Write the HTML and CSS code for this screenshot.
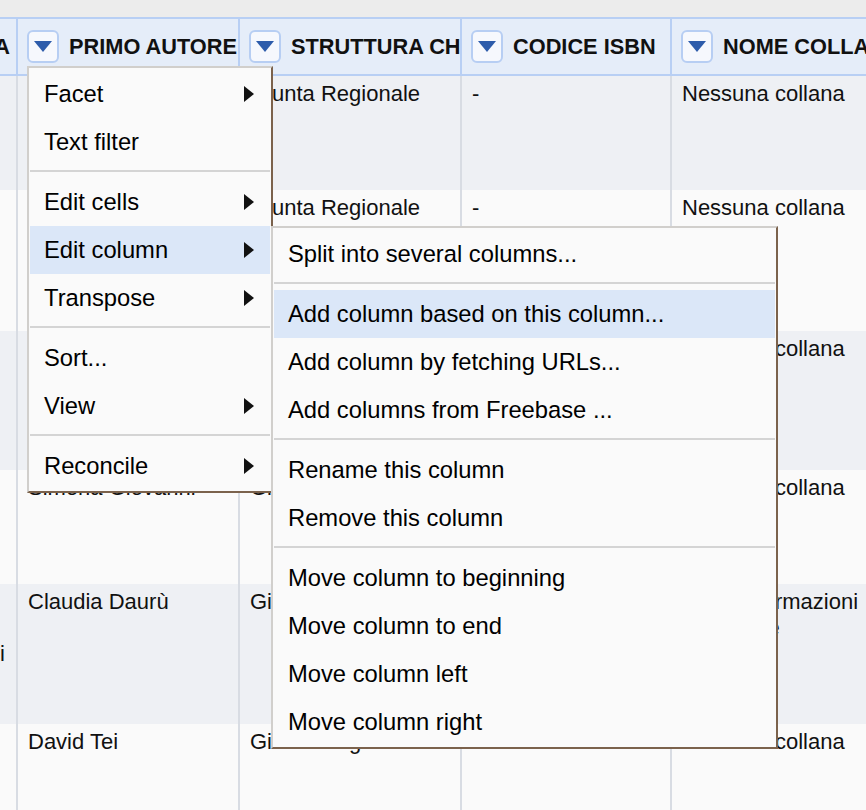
FILE: index.html
```html
<!DOCTYPE html>
<html lang="it">
<head>
<meta charset="utf-8">
<title>Edit column</title>
<link rel="stylesheet" href="styles.css">
</head>
<body>
<div class="page">
  <div class="topstrip"></div>
  <div class="grid">
    <div class="row head">
      <div class="hcell c0"><span class="htext">AREA</span></div>
      <div class="hcell"><span class="dd"></span><span class="htext">PRIMO AUTORE</span></div>
      <div class="hcell"><span class="dd"></span><span class="htext">STRUTTURA CHE HA CURATO</span></div>
      <div class="hcell"><span class="dd"></span><span class="htext">CODICE ISBN</span></div>
      <div class="hcell"><span class="dd"></span><span class="htext">NOME COLLANA</span></div>
    </div>
    <div class="row odd r1">
      <div class="cell c0"></div>
      <div class="cell">Marco Bianchi</div>
      <div class="cell">Giunta Regionale</div>
      <div class="cell">-</div>
      <div class="cell">Nessuna collana</div>
    </div>
    <div class="row even r2">
      <div class="cell c0"></div>
      <div class="cell">Laura Neri</div>
      <div class="cell">Giunta Regionale</div>
      <div class="cell">-</div>
      <div class="cell">Nessuna collana</div>
    </div>
    <div class="row odd r3">
      <div class="cell c0"></div>
      <div class="cell">Paolo Conti</div>
      <div class="cell">Giunta Regionale</div>
      <div class="cell">-</div>
      <div class="cell">Nessuna collana</div>
    </div>
    <div class="row even r4">
      <div class="cell c0"></div>
      <div class="cell">Simona Giovanni</div>
      <div class="cell">Giunta Regionale</div>
      <div class="cell">-</div>
      <div class="cell">Nessuna collana</div>
    </div>
    <div class="row odd r5">
      <div class="cell c0"><span class="tail">i</span></div>
      <div class="cell">Claudia Daurù</div>
      <div class="cell">Giunta Regionale</div>
      <div class="cell">-</div>
      <div class="cell">Serie informazioni statistiche</div>
    </div>
    <div class="row even r6">
      <div class="cell c0"></div>
      <div class="cell">David Tei</div>
      <div class="cell">Giunta Regionale</div>
      <div class="cell">-</div>
      <div class="cell">Nessuna collana</div>
    </div>
  </div>

  <div class="menu main-menu">
    <div class="mi sub">Facet</div>
    <div class="mi">Text filter</div>
    <div class="sep"></div>
    <div class="mi sub">Edit cells</div>
    <div class="mi sub active">Edit column</div>
    <div class="mi sub">Transpose</div>
    <div class="sep"></div>
    <div class="mi">Sort...</div>
    <div class="mi sub">View</div>
    <div class="sep"></div>
    <div class="mi sub">Reconcile</div>
  </div>

  <div class="menu submenu">
    <div class="mi">Split into several columns...</div>
    <div class="sep"></div>
    <div class="mi active">Add column based on this column...</div>
    <div class="mi">Add column by fetching URLs...</div>
    <div class="mi">Add columns from Freebase ...</div>
    <div class="sep"></div>
    <div class="mi">Rename this column</div>
    <div class="mi">Remove this column</div>
    <div class="sep"></div>
    <div class="mi">Move column to beginning</div>
    <div class="mi">Move column to end</div>
    <div class="mi">Move column left</div>
    <div class="mi">Move column right</div>
  </div>
</div>
</body>
</html>
```

FILE: styles.css
```css
* { box-sizing: border-box; }

html, body {
  margin: 0;
  padding: 0;
  background: #fafafa;
}

.page {
  position: relative;
  width: 866px;
  height: 810px;
  overflow: hidden;
  font-family: "Liberation Sans", Arial, Helvetica, sans-serif;
  color: #111;
}

.topstrip {
  height: 17px;
  background: #ececec;
}

.row {
  display: grid;
  grid-template-columns: 16px 222px 222px 210px 200px;
}

.head {
  height: 59px;
  background: #e5edf9;
  border-top: 2px solid #b8cff4;
  border-bottom: 2px solid #b8cff4;
}

.hcell {
  display: flex;
  align-items: center;
  gap: 10px;
  padding-left: 9px;
  border-left: 2px solid #b8cff4;
  overflow: hidden;
  white-space: nowrap;
}

.hcell.c0 {
  border-left: none;
  padding-left: 0;
  padding-right: 6px;
  justify-content: flex-end;
}

.htext {
  font-weight: bold;
  font-size: 21.75px;
  color: #111;
}

.dd {
  flex: none;
  width: 32px;
  height: 33px;
  border: 2px solid #b7cef3;
  border-radius: 6px;
  background: #f6f8fd;
  display: flex;
  align-items: center;
  justify-content: center;
}

.dd::after {
  content: "";
  border-top: 11px solid #2d5cab;
  border-left: 9px solid transparent;
  border-right: 9px solid transparent;
}

.cell {
  border-left: 2px solid #d8dce3;
  padding: 5px 10px 0 10px;
  font-size: 22px;
  line-height: 26px;
  overflow: hidden;
}

.cell.c0 {
  border-left: none;
  padding: 57px 13px 0 0;
  text-align: right;
}

.odd { background: #eef0f4; }
.even { background: #fafafa; }

.r1 { height: 114px; }
.r2 { height: 141px; }
.r3 { height: 139px; }
.r4 { height: 114px; }
.r5 { height: 140px; }
.r6 { height: 120px; }

/* menus */
.menu {
  position: absolute;
  background: #fafafa;
  border: 2px solid;
  border-color: #d1cfcc #7b624c #7b624c #d1cfcc;
  padding: 2px 1px 1px 1px;
  font-size: 23.75px;
  color: #000;
}

.main-menu {
  left: 27px;
  top: 66px;
  width: 246px;
  z-index: 2;
}

.submenu {
  left: 271px;
  top: 226px;
  width: 507px;
  z-index: 3;
}

.mi {
  height: 48px;
  display: flex;
  align-items: center;
  justify-content: space-between;
  padding: 0 16px 0 14px;
  white-space: nowrap;
}

.mi.active {
  background: #dbe7f8;
}

.mi.sub::after {
  content: "";
  border-left: 10px solid #111;
  border-top: 8px solid transparent;
  border-bottom: 8px solid transparent;
}

.sep {
  height: 2px;
  background: #d4d4d4;
  margin: 4px 0 6px;
}
```
